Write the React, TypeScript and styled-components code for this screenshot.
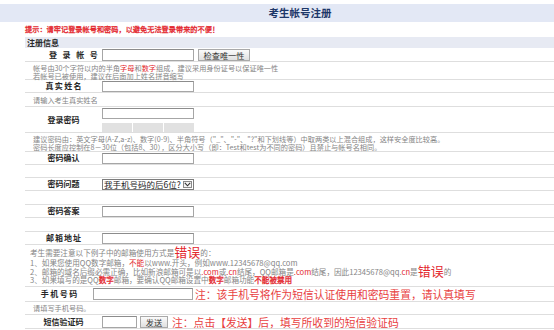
import React from "react";
import styled, { createGlobalStyle } from "styled-components";

const RED = "#e3262d";
const NOTE_RED = "#e8413f";
const LINE = "#dedede";

const GlobalStyle = createGlobalStyle`
  * { box-sizing: border-box; }
  html, body { margin: 0; padding: 0; background: #fff; }
  body {
    width: 554px;
    height: 330px;
    overflow: hidden;
    font-family: "Noto Sans CJK SC", "Noto Sans", sans-serif;
    color: #333;
  }
`;

const TitleBar = styled.div`
  margin-top: 4px;
  height: 18px;
  background: #e3e8f5;
  display: flex;
  align-items: center;
  justify-content: center;
  padding-left: 46px;
  font-size: 10.5px;
  line-height: 18px;
  font-weight: bold;
  color: #1d3768;
`;

const Hint = styled.div`
  height: 15px;
  line-height: 15px;
  padding-left: 25px;
  font-size: 7.2px;
  color: ${RED};
  -webkit-text-stroke: 0.3px ${RED};
  white-space: nowrap;
`;

const Form = styled.div`
  margin-left: 25px;
`;

const SectionBar = styled.div`
  height: 11px;
  line-height: 11px;
  background: #e7eaf3;
  padding-left: 2px;
  font-size: 8px;
  font-weight: bold;
  color: #2a2a2a;
`;

const Row = styled.div<{ $h: number }>`
  display: flex;
  align-items: center;
  height: ${(p) => p.$h}px;
  border-bottom: 1px solid ${LINE};
  white-space: nowrap;
`;

const Label = styled.div<{ $w?: number; $sp?: number; $indent?: number }>`
  width: ${(p) => p.$w ?? 77}px;
  flex-shrink: 0;
  text-align: center;
  font-size: 8px;
  line-height: 10px;
  font-weight: bold;
  color: #262626;
  letter-spacing: ${(p) => p.$sp ?? 0}px;
  text-indent: ${(p) => p.$indent ?? p.$sp ?? 0}px;
`;

const TextInput = styled.input<{ $w?: number; $h?: number }>`
  display: block;
  width: ${(p) => p.$w ?? 92}px;
  height: ${(p) => p.$h ?? 11}px;
  margin: 0;
  padding: 0 2px;
  border: 1px solid #a6a6a6;
  border-top-color: #8c8c8c;
  background: #fff;
  outline: none;
  font-size: 8px;
`;

const GrayButton = styled.button<{ $w: number }>`
  width: ${(p) => p.$w}px;
  height: 12px;
  margin: 0 0 0 ${(p) => (p.$w > 40 ? 4 : 3)}px;
  padding: 0;
  border: 1px solid #a9a9a9;
  background: linear-gradient(#fbfbfb, #e0e0e0);
  font-family: inherit;
  font-size: 8.2px;
  line-height: 10px;
  color: #333;
`;

const Help = styled.div<{ $h: number; $pt: number }>`
  height: ${(p) => p.$h}px;
  padding: ${(p) => p.$pt}px 0 0 8px;
  border-bottom: 1px solid ${LINE};
  font-size: 7.2px;
  line-height: 8px;
  color: #858585;
  white-space: nowrap;
`;

const Red = styled.span<{ $bold?: boolean }>`
  color: ${RED};
  -webkit-text-stroke: ${(p) => (p.$bold ? `0.3px ${RED}` : "0")};
`;

const Big = styled.span`
  color: ${RED};
  font-size: 13px;
  line-height: 0;
  vertical-align: -1px;
`;

const PasswordCell = styled.div`
  display: flex;
  flex-direction: column;
  gap: 4px;
  align-self: flex-start;
  padding-top: 1px;
`;

const Meter = styled.div`
  display: flex;
  gap: 1px;
  width: 92px;
  height: 9px;
`;

const MeterCell = styled.div`
  flex: 1;
  background: #e1e1e1;
`;

const SelectBox = styled.div`
  position: relative;
  width: 92px;
  height: 11px;
`;

const Select = styled.select`
  display: block;
  appearance: none;
  width: 100%;
  height: 11px;
  margin: 0;
  padding: 0 0 0 1px;
  border: 1px solid #7c7c7c;
  border-radius: 0;
  background: #fff;
  font-family: inherit;
  font-size: 8.5px;
  line-height: 9px;
  color: #222;
  outline: none;
`;

const SelectArrow = styled.div`
  position: absolute;
  top: 2px;
  right: 2px;
  width: 9px;
  height: 7px;
  border: 1px solid #8a8a8a;
  background: #f4f4f4;
  display: flex;
  align-items: center;
  justify-content: center;
  pointer-events: none;
`;

const Notes = styled.div`
  height: 42px;
  padding: 3px 0 0 5px;
  border-bottom: 1px solid ${LINE};
  font-size: 7.6px;
  color: #858585;
  white-space: nowrap;
`;

const NoteLine = styled.div<{ $h: number }>`
  height: ${(p) => p.$h}px;
  line-height: ${(p) => p.$h}px;
`;

const RedNote = styled.span<{ $ml: number }>`
  margin-left: ${(p) => p.$ml}px;
  font-size: 10.8px;
  line-height: 12px;
  color: ${NOTE_RED};
`;

const App = () => {
  return (
    <>
      <GlobalStyle />
      <TitleBar>考生帐号注册</TitleBar>
      <Hint>提示：请牢记登录帐号和密码，以避免无法登录带来的不便！</Hint>
      <Form>
        <SectionBar>注册信息</SectionBar>

        <Row $h={14}>
          <Label $sp={5.6} $indent={24}>
            登录帐号
          </Label>
          <TextInput $h={12} />
          <GrayButton $w={52}>检查唯一性</GrayButton>
        </Row>
        <Help $h={18} $pt={2}>
          <div>
            帐号由30个字符以内的半角<Red>字母</Red>和<Red>数字</Red>组成，建议采用身份证号以保证唯一性
          </div>
          <div>若帐号已被使用，建议在后面加上姓名拼音缩写</div>
        </Help>

        <Row $h={13}>
          <Label $sp={1.3}>真实姓名</Label>
          <TextInput />
        </Row>
        <Help $h={14} $pt={3}>
          请输入考生真实姓名
        </Help>

        <Row $h={26}>
          <Label>登录密码</Label>
          <PasswordCell>
            <TextInput type="password" />
            <Meter>
              <MeterCell />
              <MeterCell />
              <MeterCell />
            </Meter>
          </PasswordCell>
        </Row>
        <Help $h={19} $pt={2}>
          <div>
            建议密码由：英文字母(A-Z,a-z)、数字(0-9)、半角符号（"_"、"-"、"?"和下划线等）中取两类以上混合组成，这样安全度比较高。
          </div>
          <div>
            密码长度应控制在8－30位（包括8、30），区分大小写（即：Test和test为不同的密码）且禁止与帐号名相同。
          </div>
        </Help>

        <Row $h={13}>
          <Label>密码确认</Label>
          <TextInput type="password" />
        </Row>
        <Help $h={13} $pt={0} />

        <Row $h={13}>
          <Label>密码问题</Label>
          <SelectBox>
            <Select defaultValue="q1">
              <option value="q1">我手机号码的后6位?</option>
            </Select>
            <SelectArrow>
              <svg width="7" height="5" viewBox="0 0 7 5">
                <path d="M0.8 0.8 L3.5 3.8 L6.2 0.8" fill="none" stroke="#333" strokeWidth="1.1" />
              </svg>
            </SelectArrow>
          </SelectBox>
        </Row>
        <Help $h={14} $pt={0} />

        <Row $h={13}>
          <Label>密码答案</Label>
          <TextInput />
        </Row>
        <Help $h={14} $pt={0} />

        <Row $h={13}>
          <Label $sp={1}>邮箱地址</Label>
          <TextInput />
        </Row>
        <Notes>
          <NoteLine $h={10}>
            考生需要注意以下例子中的邮箱使用方式是<Big>错误</Big>的：
          </NoteLine>
          <NoteLine $h={9}>
            1、如果您使用QQ数字邮箱，<Red>不能</Red>以www.开头，例如www.12345678@qq.com
          </NoteLine>
          <NoteLine $h={9}>
            2、邮箱的域名后缀必需正确，比如新浪邮箱可是以<Red>.com</Red>或<Red>.cn</Red>结尾，QQ邮箱是
            <Red>.com</Red>结尾，因此12345678@qq.<Red>cn</Red>是<Big>错误</Big>的
          </NoteLine>
          <NoteLine $h={8}>
            3、如果填写的是QQ<Red $bold>数字</Red>邮箱，要确认QQ邮箱设置中<Red $bold>数字</Red>邮箱功能
            <Red $bold>不能被禁用</Red>
          </NoteLine>
        </Notes>

        <Row $h={15}>
          <Label $w={68} $sp={1.5}>
            手机号码
          </Label>
          <TextInput $w={100} $h={12} />
          <RedNote $ml={2}>注：该手机号将作为短信认证使用和密码重置，请认真填写</RedNote>
        </Row>
        <Help $h={13} $pt={2}>
          请填写手机号码。
        </Help>

        <Row $h={14}>
          <Label>短信验证码</Label>
          <TextInput $w={35} $h={12} />
          <GrayButton $w={28}>发送</GrayButton>
          <RedNote $ml={4}>注：点击【发送】后，填写所收到的短信验证码</RedNote>
        </Row>
      </Form>
    </>
  );
};

export default App;
